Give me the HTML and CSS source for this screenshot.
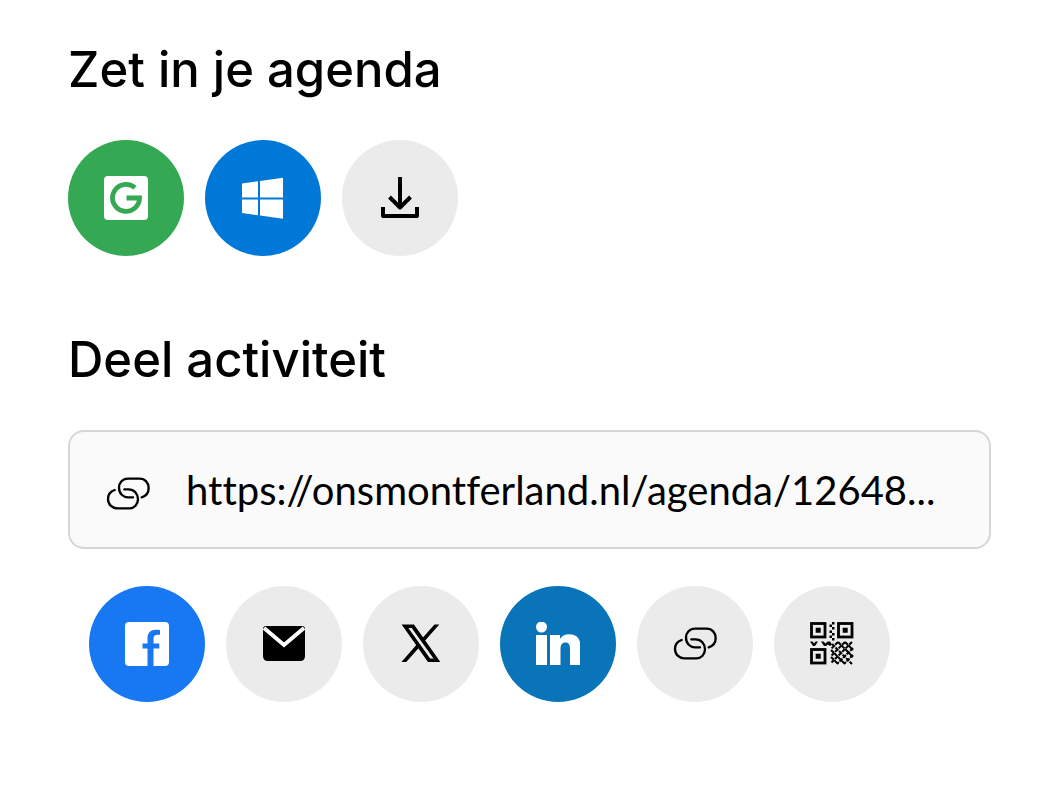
FILE: index.html
```html
<!DOCTYPE html>
<html lang="nl">
<head>
    <meta charset="UTF-8">
    <meta name="viewport" content="width=device-width, initial-scale=1">
    <title>Deel activiteit</title>
    <link rel="stylesheet" href="styles.css">
</head>
<body>
    <main class="page">
        <section class="agenda">
            <h2>Zet in je agenda</h2>
            <div class="buttons">
                <a class="btn google" href="#" aria-label="Google Agenda">
                    <svg class="icon" viewBox="0 0 44 44">
                        <rect width="44" height="44" rx="4" fill="#fff"/>
                        <path d="M31 11.8A13.500 13.500 0 1 0 35.500 22H22.5" fill="none" stroke="#34a853" stroke-width="4.8"/>
                    </svg>
                </a>
                <a class="btn windows" href="#" aria-label="Outlook">
                    <svg class="icon" viewBox="0 0 44 44">
                        <path d="M1 7.500 17 5.200V21.500H1zM19 4.900 42 1.800V21.500H19zM1 23.500H17V39.200L1 37zM19 23.500H42V42.800L19 39.600z" fill="#fff"/>
                    </svg>
                </a>
                <a class="btn" href="#" aria-label="Download">
                    <svg class="icon" viewBox="0 0 44 44">
                        <path d="M22 1V30M11.5 21 22 31.5 32.5 21M5 31V40H39V31" fill="none" stroke="#000" stroke-width="4" stroke-linejoin="round"/>
                    </svg>
                </a>
            </div>
        </section>
        <section class="share">
            <h2><label for="url">Deel activiteit</label></h2>
            <div class="url-box">
                <svg class="icon" viewBox="22 25 132 132">
                    <path class="link" d="M129 101C142 97 150 86 150 73C150 57 139 45 123 45H88C72 45 61 57 61 72C61 90 74 101 88 101H103M48 79C36 83 28 92 28 106C28 122 40 134 56 134H92C107 134 118 122 118 107C118 90 106 77 90 77H77"/>
                </svg>
                <input type="text" id="url" value="https://onsmontferland.nl/agenda/12648..." readonly>
            </div>
            <div class="buttons inset">
                <a class="btn facebook" href="#" aria-label="Facebook">
                    <svg class="icon" viewBox="0 0 44 44">
                        <path d="M4 0H40a4 4 0 0 1 4 4V40a4 4 0 0 1-4 4H28.500V26.500H34.300V21.500H28.500V17C28.500 14 30 12.800 32.500 12.800H35V8C34 7.800 32.500 7.700 31 7.700C25.500 7.700 22.500 11 22.500 16.500V21.500H17.500V26.500H22.500V44H4a4 4 0 0 1-4-4V4a4 4 0 0 1 4-4z" fill="#fff"/>
                    </svg>
                </a>
                <a class="btn" href="#" aria-label="E-mail">
                    <svg class="icon" viewBox="0 0 44 44">
                        <path d="M4 4H40Q43 4 43 7V34Q43 39 38 39H6Q1 39 1 34V7Q1 4 4 4z"/>
                        <path d="M2 6 22 23 42 6" fill="none" stroke="#fff" stroke-width="4"/>
                    </svg>
                </a>
                <a class="btn" href="#" aria-label="X">
                    <svg class="icon" viewBox="-2.500 -2 29 29">
                        <path d="M14.258 10.152 23.176 0h-2.113l-7.747 8.813L7.133 0H0l9.352 13.328L0 23.973h2.113l8.176-9.309 6.531 9.309h7.133zm-2.895 3.293-.949-1.328L2.875 1.560h3.246l6.086 8.523.945 1.328 7.910 11.078h-3.246z" stroke="#000" stroke-width=".8"/>
                    </svg>
                </a>
                <a class="btn linkedin" href="#" aria-label="LinkedIn">
                    <svg class="icon" viewBox="0 0 44 44">
                        <circle cx="5.500" cy="5" r="5.500" fill="#fff"/>
                        <path d="M0 13H11V43H0zM14 13H24V17C25.500 14.300 29 12.300 33 12.300C41 12.300 44.500 17 44.500 25V43H34V27C34 23 33 20.500 29.500 20.500C26 20.500 24.500 23 24.500 27V43H14z" fill="#fff"/>
                    </svg>
                </a>
                <button class="btn" type="button" aria-label="Kopieer link">
                    <svg class="icon" viewBox="22 25 132 132">
                        <path class="link" d="M129 101C142 97 150 86 150 73C150 57 139 45 123 45H88C72 45 61 57 61 72C61 90 74 101 88 101H103M48 79C36 83 28 92 28 106C28 122 40 134 56 134H92C107 134 118 122 118 107C118 90 106 77 90 77H77"/>
                    </svg>
                </button>
                <button class="btn" type="button" aria-label="QR-code">
                    <svg class="icon" viewBox="0 0 44 44">
                        <g fill="none" stroke="#000" stroke-width="2.800">
                            <rect x="1.500" y="1.500" width="13.500" height="13.500"/>
                            <rect x="28.500" y="1.500" width="13.500" height="13.500"/>
                            <rect x="1.500" y="27.500" width="13.500" height="13.500"/>
                        </g>
                        <path d="M5.700 5.700h5v5h-5zM32.700 5.700h5v5h-5zM5.700 31.700h5v5h-5z"/>
                        <path d="M22 0h2.500v2.500h-2.500zM19.500 2.500h2.500v2.500h-2.500zM22 5h2.500v2.500h-2.500zM19.500 8.500h2.500v2.500h-2.500zM22 11h2.500v2.500h-2.500zM19.500 13.500h2.500v2.500h-2.500zM22 16h2.500v2.500h-2.500z"/>
                        <path d="M0 19.500h2.500l1.500 2 1.500-2h2.500l-3 4.500h-2zM11 19.500h2.500l2 2 2-2h2.500l2 3-2 1.500-2-1.500-2 1.500h-2z"/>
                        <path d="M22 22 42 42M28 20 43 35M35 20 43 28M21 28 35 42M21 35 28 42M28 20 21 27M35 20 21 34M42 20 21 41M43 26 27 42M43 33 34 42" fill="none" stroke="#000" stroke-width="2" stroke-dasharray="4 1"/>
                    </svg>
                </button>
            </div>
        </section>
    </main>
</body>
</html>
```
FILE: styles.css
```css
* {
    box-sizing: border-box;
}
body {
    margin: 0;
    background-color: #fff;
    color: #000;
    font-family: Lato, sans-serif;
}
.page {
    padding: 40px 69px 40px 68px;
}
h2 {
    margin: 0;
    font-family: Inter, sans-serif;
    font-size: 49px;
    line-height: 60px;
    font-weight: 500;
}
.agenda {
    margin-bottom: 74px;
}
.agenda h2 {
    margin-bottom: 40px;
}
.share h2 {
    margin-bottom: 40px;
}
.buttons {
    display: flex;
    flex-wrap: wrap;
    gap: 21px;
}
.inset {
    padding: 0 21px;
}
.btn {
    display: flex;
    align-items: center;
    justify-content: center;
    width: 116px;
    height: 116px;
    padding: 0;
    border: none;
    border-radius: 50%;
    background-color: #ebebeb;
    cursor: pointer;
}
.google {
    background-color: #34a853;
}
.windows {
    background-color: #0078d7;
}
.facebook {
    background-color: #1877f2;
}
.linkedin {
    background-color: #0975b8;
}
.icon {
    flex: none;
    width: 44px;
    height: 44px;
}
.link {
    fill: none;
    stroke: #000;
    stroke-width: 7;
    stroke-linecap: round;
}
.url-box {
    display: flex;
    align-items: center;
    gap: 36px;
    height: 119px;
    margin-bottom: 37px;
    padding: 0 36px;
    border: 2px solid #d6d6d6;
    border-radius: 16px;
    background-color: #fafafa;
}
.url-box .icon {
    margin-top: 8px;
}
.url-box input {
    flex: 1;
    min-width: 0;
    padding: 0;
    border: none;
    outline: none;
    background: transparent;
    color: #000;
    font-family: inherit;
    font-size: 40px;
    font-variant-ligatures: none;
    line-height: 48px;
    text-overflow: ellipsis;
}
```
